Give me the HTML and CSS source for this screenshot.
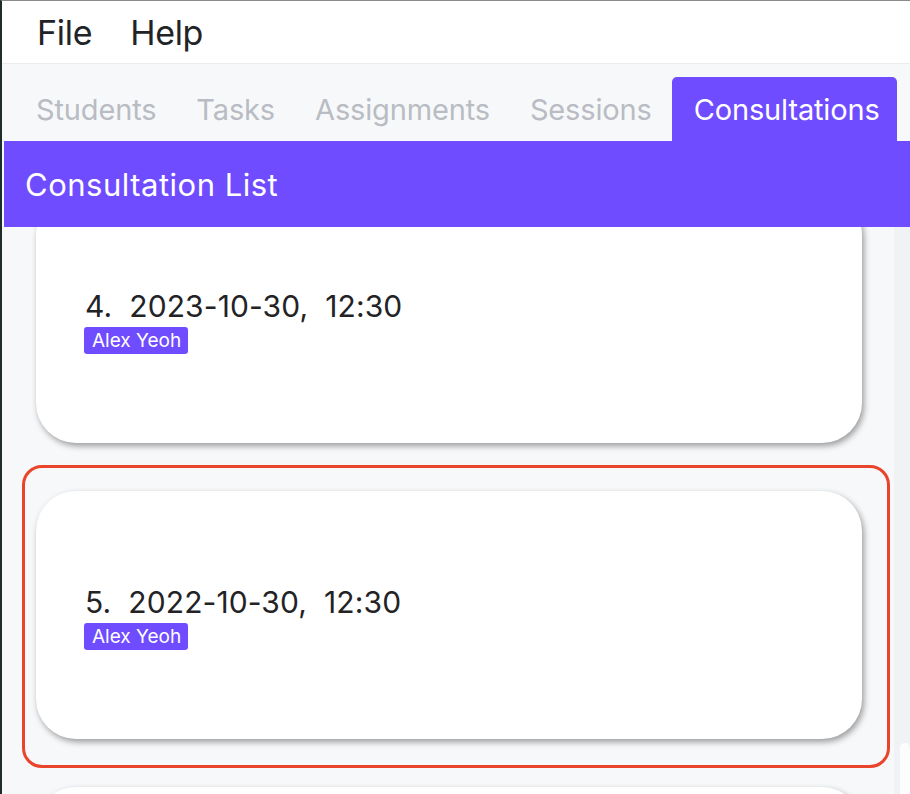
FILE: index.html
```html
<!DOCTYPE html>
<html>
<head>
<meta charset="utf-8">
<link rel="stylesheet" href="styles.css">
</head>
<body>
<div class="app">
  <div class="menubar">
    <span class="menu-item">File</span>
    <span class="menu-item">Help</span>
  </div>
  <div class="tabs">
    <div class="tab">Students</div>
    <div class="tab">Tasks</div>
    <div class="tab">Assignments</div>
    <div class="tab">Sessions</div>
    <div class="tab active">Consultations</div>
  </div>
  <div class="header">Consultation List</div>
  <div class="list-view">
    <div class="list">
      <div class="cell">
        <div class="card">
          <div class="title">4.  2023-10-30,  12:30</div>
          <div class="tags"><span class="tag">Alex Yeoh</span></div>
        </div>
      </div>
      <div class="cell selected">
        <div class="card">
          <div class="title">5.  2022-10-30,  12:30</div>
          <div class="tags"><span class="tag">Alex Yeoh</span></div>
        </div>
      </div>
      <div class="cell">
        <div class="card"></div>
      </div>
    </div>
    <div class="scroll-track"><div class="scroll-thumb"></div></div>
  </div>
</div>
</body>
</html>
```

FILE: styles.css
```css
* { box-sizing: border-box; }
html, body {
  margin: 0;
  padding: 0;
  width: 910px;
  height: 794px;
  overflow: hidden;
  background: #f7f8fa;
  font-family: Inter, "Noto Sans", sans-serif;
}
.app {
  width: 910px;
  height: 794px;
  border-top: 1px solid #8a8a8a;
  border-left: 2px solid #1e2c2c;
  display: flex;
  flex-direction: column;
  overflow: hidden;
}
.menubar {
  height: 63px;
  background: #ffffff;
  border-bottom: 1px solid #ececee;
  display: flex;
  align-items: center;
  padding-left: 35px;
  gap: 38px;
  flex: none;
}
.menu-item {
  font-size: 34px;
  color: #222326;
  letter-spacing: -0.3px;
}
.tabs {
  height: 77px;
  flex: none;
  background: #f7f8fa;
  display: flex;
  align-items: flex-end;
  padding-left: 14px;
}
.tab {
  height: 64px;
  padding: 0 20px 0 20px;
  display: flex;
  align-items: center;
  font-size: 29px;
  color: #b9bcc3;
  letter-spacing: -0.15px;
}
.tab.active {
  background: #6f4cff;
  color: #ffffff;
  border-radius: 5px 5px 0 0;
  padding: 0 17px 0 22px;
}
.header {
  height: 86px;
  flex: none;
  margin-left: 2px;
  background: #6f4cff;
  color: #ffffff;
  font-size: 31px;
  display: flex;
  align-items: center;
  padding-left: 21px;
  letter-spacing: 0.5px;
}
.list-view {
  flex: 1;
  position: relative;
  overflow: hidden;
  display: flex;
}
.list {
  flex: 1;
  margin-top: -32px;
  padding-left: 34px;
}
.cell {
  position: relative;
  width: 826px;
  margin-bottom: 48px;
}
.cell.selected::after {
  content: "";
  position: absolute;
  top: -26px;
  bottom: -29px;
  left: -14px;
  right: -28px;
  border: 3px solid #e8452b;
  border-radius: 20px;
}
.card {
  height: 248px;
  background: #ffffff;
  border-radius: 40px;
  box-shadow: 2px 3px 6px rgba(0, 0, 0, 0.38);
  display: flex;
  flex-direction: column;
  justify-content: center;
  padding-left: 49px;
  padding-top: 4px;
}
.title {
  white-space: pre;
  font-size: 30px;
  color: #232326;
  line-height: 36px;
  letter-spacing: 0.1px;
}
.tags {
  display: flex;
  margin-top: 3px;
}
.tag {
  background: #6f4cff;
  color: #ffffff;
  font-size: 19px;
  height: 27px;
  line-height: 27px;
  padding: 0 7px 0 8px;
  border-radius: 3px;
  margin-left: -1px;
}
.scroll-track {
  width: 16px;
  flex: none;
  background: #f1f2f6;
  position: relative;
}
.scroll-thumb {
  position: absolute;
  left: 6px;
  right: 0;
  top: 516px;
  height: 200px;
  background: #fdfdfe;
  border-radius: 5px;
}
```
